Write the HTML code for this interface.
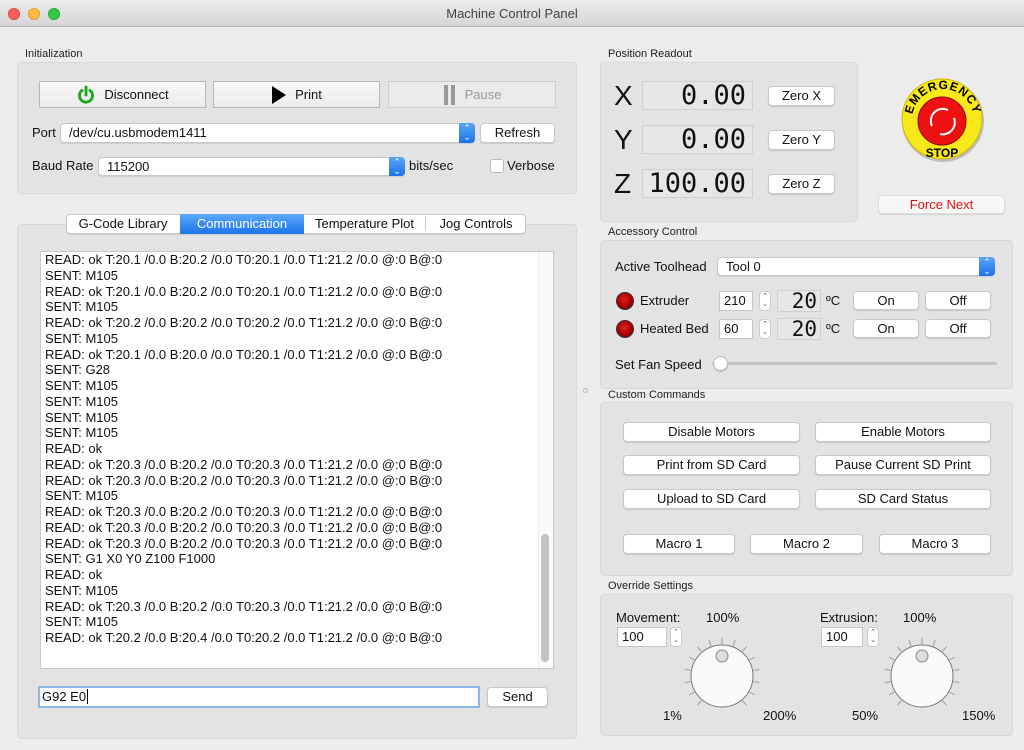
<!DOCTYPE html>
<html><head><meta charset="utf-8"><style>
*{box-sizing:border-box;margin:0;padding:0}
body{width:1024px;height:750px;background:#ececec;font-family:"Liberation Sans",sans-serif;font-size:13px;color:#111;position:relative;overflow:hidden}
.a{position:absolute}
.lbl{position:absolute;font-size:11px;color:#222}
.grp{position:absolute;background:#e3e3e3;border:1px solid #d8d8d8;border-radius:4px}
.btn{position:absolute;background:#fff;border:1px solid #c8c8c8;border-radius:4px;box-shadow:0 1px 1px rgba(0,0,0,.12);text-align:center;font-size:13px;line-height:18px}
.bigbtn{position:absolute;background:linear-gradient(#f8f8f8,#ebebeb);border:1px solid #b8b8b8;font-size:13px;display:flex;align-items:center;justify-content:center;gap:8px}
.combo{position:absolute;background:#fff;border:1px solid #c8c8c8;border-radius:4px;box-shadow:0 1px 1px rgba(0,0,0,.1);padding-left:8px;line-height:18px}
.combo .arr{position:absolute;right:-1px;top:-1px;bottom:-1px;width:16px;background:linear-gradient(#5aa6f7,#1a72e8);border-radius:0 4px 4px 0;color:#fff;font-size:9px;text-align:center;line-height:9px;padding-top:1px}
.lcd{position:absolute;background:#e6e6e6;border:1px solid #cfcfcf;font-family:"DejaVu Sans Mono","Liberation Mono",monospace;text-align:right;color:#111}
.inp{position:absolute;background:#fff;border:1px solid #c6c6c6;padding-left:4px;line-height:18px}
.step{position:absolute;width:12px;height:20px;background:#fff;border:1px solid #ccc;border-radius:4px;font-size:7px;line-height:8px;text-align:center;color:#555;padding-top:1px}
.led{position:absolute;width:18px;height:18px;border-radius:50%;background:radial-gradient(circle at 45% 40%,#d22 0,#a00 55%,#500 100%);border:1px solid #333}
</style></head><body>
<div class="a" style="left:0;top:0;width:1024px;height:27px;background:linear-gradient(#ebebeb,#d6d6d6);border-bottom:1px solid #b4b4b4"></div>
<div class="a" style="left:8px;top:8px;width:12px;height:12px;border-radius:50%;background:#fc605c;border:1px solid #df4744"></div>
<div class="a" style="left:28px;top:8px;width:12px;height:12px;border-radius:50%;background:#fdbc40;border:1px solid #de9f34"></div>
<div class="a" style="left:48px;top:8px;width:12px;height:12px;border-radius:50%;background:#34c84a;border:1px solid #27aa35"></div>
<div class="a" style="left:0;top:6px;width:1024px;text-align:center;font-size:13px;color:#444">Machine Control Panel</div>

<div class="lbl" style="left:25px;top:48px">Initialization</div>
<div class="grp" style="left:17px;top:62px;width:560px;height:132px"></div>
<div class="bigbtn" style="left:39px;top:81px;width:167px;height:27px"><svg width="20" height="20" viewBox="0 0 20 20"><path d="M6 5.5A6.5 6.5 0 1 0 14 5.5" fill="none" stroke="#1fa824" stroke-width="3" stroke-linecap="round"/><line x1="10" y1="2" x2="10" y2="10" stroke="#1fa824" stroke-width="3" stroke-linecap="round"/></svg>Disconnect</div>
<div class="bigbtn" style="left:213px;top:81px;width:167px;height:27px"><svg width="16" height="20"><path d="M1 1L15 10L1 19Z" fill="#000"/></svg>Print</div>
<div class="bigbtn" style="left:388px;top:81px;width:168px;height:27px;color:#999;border-color:#ccc;background:#eaeaea"><svg width="14" height="22"><rect x="1" y="1" width="4" height="20" fill="#999"/><rect x="8" y="1" width="4" height="20" fill="#999"/></svg>Pause</div>
<div class="a" style="left:32px;top:125px">Port</div>
<div class="combo" style="left:60px;top:123px;width:415px;height:20px">/dev/cu.usbmodem1411<div class="arr">⌃<br>⌄</div></div>
<div class="btn" style="left:480px;top:123px;width:75px;height:20px">Refresh</div>
<div class="a" style="left:32px;top:158px">Baud Rate</div>
<div class="combo" style="left:98px;top:157px;width:307px;height:19px">115200<div class="arr">⌃<br>⌄</div></div>
<div class="a" style="left:409px;top:158px">bits/sec</div>
<div class="a" style="left:490px;top:159px;width:14px;height:14px;background:#fff;border:1px solid #bbb;border-radius:3px"></div>
<div class="a" style="left:507px;top:158px">Verbose</div>

<div class="grp" style="left:17px;top:224px;width:560px;height:515px"></div>
<div class="a" style="left:66px;top:214px;width:460px;height:20px;background:#fff;border:1px solid #c8c8c8;border-radius:4px;box-shadow:0 1px 1px rgba(0,0,0,.1)"></div>
<div class="a" style="left:66px;top:216px;width:114px;text-align:center">G-Code Library</div>
<div class="a" style="left:180px;top:214px;width:124px;height:20px;background:linear-gradient(#5ba8f8,#1b74ea);color:#fff;text-align:center;line-height:20px">Communication</div>
<div class="a" style="left:304px;top:216px;width:122px;text-align:center;border-right:1px solid #ccc">Temperature Plot</div>
<div class="a" style="left:426px;top:216px;width:100px;text-align:center">Jog Controls</div>

<div class="a" style="left:40px;top:251px;width:514px;height:418px;background:#fff;border:1px solid #c8c8c8"></div>
<div class="a" style="left:538px;top:252px;width:15px;height:416px;background:#fafafa;border-left:1px solid #eee"></div>
<div class="a" style="left:541px;top:534px;width:8px;height:128px;background:#c2c2c2;border-radius:4px"></div>
<div class="a" style="left:45px;top:252px;line-height:15.75px;white-space:pre;font-size:13px">READ: ok T:20.1 /0.0 B:20.2 /0.0 T0:20.1 /0.0 T1:21.2 /0.0 @:0 B@:0
SENT: M105
READ: ok T:20.1 /0.0 B:20.2 /0.0 T0:20.1 /0.0 T1:21.2 /0.0 @:0 B@:0
SENT: M105
READ: ok T:20.2 /0.0 B:20.2 /0.0 T0:20.2 /0.0 T1:21.2 /0.0 @:0 B@:0
SENT: M105
READ: ok T:20.1 /0.0 B:20.0 /0.0 T0:20.1 /0.0 T1:21.2 /0.0 @:0 B@:0
SENT: G28
SENT: M105
SENT: M105
SENT: M105
SENT: M105
READ: ok
READ: ok T:20.3 /0.0 B:20.2 /0.0 T0:20.3 /0.0 T1:21.2 /0.0 @:0 B@:0
READ: ok T:20.3 /0.0 B:20.2 /0.0 T0:20.3 /0.0 T1:21.2 /0.0 @:0 B@:0
SENT: M105
READ: ok T:20.3 /0.0 B:20.2 /0.0 T0:20.3 /0.0 T1:21.2 /0.0 @:0 B@:0
READ: ok T:20.3 /0.0 B:20.2 /0.0 T0:20.3 /0.0 T1:21.2 /0.0 @:0 B@:0
READ: ok T:20.3 /0.0 B:20.2 /0.0 T0:20.3 /0.0 T1:21.2 /0.0 @:0 B@:0
SENT: G1 X0 Y0 Z100 F1000
READ: ok
SENT: M105
READ: ok T:20.3 /0.0 B:20.2 /0.0 T0:20.3 /0.0 T1:21.2 /0.0 @:0 B@:0
SENT: M105
READ: ok T:20.2 /0.0 B:20.4 /0.0 T0:20.2 /0.0 T1:21.2 /0.0 @:0 B@:0</div>
<div class="a" style="left:38px;top:686px;width:442px;height:22px;background:#fff;border:2px solid #8fb8ea;padding-left:2px;line-height:18px">G92 E0<span style="border-left:1px solid #000;margin-left:1px"></span></div>
<div class="btn" style="left:487px;top:687px;width:61px;height:20px">Send</div>

<div class="lbl" style="left:608px;top:48px">Position Readout</div>
<div class="grp" style="left:600px;top:62px;width:258px;height:160px"></div>
<div class="a" style="left:614px;top:80px;font-size:28px">X</div>
<div class="a" style="left:614px;top:124px;font-size:28px">Y</div>
<div class="a" style="left:614px;top:168px;font-size:28px">Z</div>
<div class="lcd" style="left:642px;top:81px;width:111px;height:29px;font-size:27px;line-height:27px;padding-right:6px">0.00</div>
<div class="lcd" style="left:642px;top:125px;width:111px;height:29px;font-size:27px;line-height:27px;padding-right:6px">0.00</div>
<div class="lcd" style="left:642px;top:169px;width:111px;height:29px;font-size:27px;line-height:27px;padding-right:6px">100.00</div>
<div class="btn" style="left:768px;top:86px;width:67px;height:20px">Zero X</div>
<div class="btn" style="left:768px;top:130px;width:67px;height:20px">Zero Y</div>
<div class="btn" style="left:768px;top:174px;width:67px;height:20px">Zero Z</div>
<svg class="a" style="left:898px;top:74px" width="90" height="92" viewBox="0 0 90 92">
<defs><path id="tp" d="M14 46A31 31 0 0 1 76 46"/><path id="bp" d="M20 56A27 27 0 0 0 70 56"/></defs>
<circle cx="45" cy="47" r="41" fill="#333" opacity=".25"/>
<circle cx="44" cy="45" r="40" fill="#f6e81a" stroke="#c8b800"/>
<circle cx="44" cy="47" r="24" fill="#e11" stroke="#900"/>
<path d="M34 52A12 12 0 0 1 50 36" fill="none" stroke="#fff" stroke-width="2"/>
<path d="M56 44A12 12 0 0 1 42 60" fill="none" stroke="#fff" stroke-width="2"/>
<text font-family="Liberation Sans" font-weight="bold" font-size="12" fill="#000"><textPath href="#tp" startOffset="50%" text-anchor="middle" letter-spacing="1">EMERGENCY</textPath></text>
<text font-family="Liberation Sans" font-weight="bold" font-size="12" fill="#000" x="44" y="83" text-anchor="middle">STOP</text>
</svg>
<div class="btn" style="left:878px;top:195px;width:127px;height:19px;color:#e01010;border-color:#ddd;background:#f7f7f7">Force Next</div>

<div class="lbl" style="left:608px;top:226px">Accessory Control</div>
<div class="grp" style="left:600px;top:240px;width:413px;height:149px"></div>
<div class="a" style="left:615px;top:259px">Active Toolhead</div>
<div class="combo" style="left:717px;top:257px;width:278px;height:19px">Tool 0<div class="arr">⌃<br>⌄</div></div>
<div class="led" style="left:616px;top:292px"></div>
<div class="a" style="left:640px;top:293px">Extruder</div>
<div class="led" style="left:616px;top:320px"></div>
<div class="a" style="left:640px;top:321px">Heated Bed</div>
<div class="inp" style="left:719px;top:291px;width:34px;height:20px">210</div>
<div class="inp" style="left:719px;top:319px;width:34px;height:20px">60</div>
<div class="step" style="left:759px;top:291px">⌃<br>⌄</div>
<div class="step" style="left:759px;top:319px">⌃<br>⌄</div>
<div class="lcd" style="left:777px;top:290px;width:44px;height:22px;font-size:21px;line-height:20px;padding-right:3px">20</div>
<div class="lcd" style="left:777px;top:318px;width:44px;height:22px;font-size:21px;line-height:20px;padding-right:3px">20</div>
<div class="a" style="left:826px;top:293px">ºC</div>
<div class="a" style="left:826px;top:321px">ºC</div>
<div class="btn" style="left:853px;top:291px;width:66px;height:19px">On</div>
<div class="btn" style="left:925px;top:291px;width:66px;height:19px">Off</div>
<div class="btn" style="left:853px;top:319px;width:66px;height:19px">On</div>
<div class="btn" style="left:925px;top:319px;width:66px;height:19px">Off</div>
<div class="a" style="left:615px;top:357px">Set Fan Speed</div>
<div class="a" style="left:712px;top:362px;width:285px;height:3px;background:#c4c4c4;border-radius:2px"></div>
<div class="a" style="left:713px;top:356px;width:15px;height:15px;border-radius:50%;background:#fff;border:1px solid #bbb;box-shadow:0 1px 1px rgba(0,0,0,.2)"></div>
<div class="a" style="left:583px;top:388px;width:5px;height:5px;border-radius:50%;border:1px solid #bbb"></div>

<div class="lbl" style="left:608px;top:389px">Custom Commands</div>
<div class="grp" style="left:600px;top:402px;width:413px;height:174px"></div>
<div class="btn" style="left:623px;top:422px;width:177px;height:20px">Disable Motors</div>
<div class="btn" style="left:815px;top:422px;width:176px;height:20px">Enable Motors</div>
<div class="btn" style="left:623px;top:455px;width:177px;height:20px">Print from SD Card</div>
<div class="btn" style="left:815px;top:455px;width:176px;height:20px">Pause Current SD Print</div>
<div class="btn" style="left:623px;top:489px;width:177px;height:20px">Upload to SD Card</div>
<div class="btn" style="left:815px;top:489px;width:176px;height:20px">SD Card Status</div>
<div class="btn" style="left:623px;top:534px;width:112px;height:20px">Macro 1</div>
<div class="btn" style="left:750px;top:534px;width:113px;height:20px">Macro 2</div>
<div class="btn" style="left:879px;top:534px;width:112px;height:20px">Macro 3</div>

<div class="lbl" style="left:608px;top:580px">Override Settings</div>
<div class="grp" style="left:600px;top:594px;width:413px;height:142px"></div>
<div class="a" style="left:616px;top:610px">Movement:</div>
<div class="a" style="left:706px;top:610px">100%</div>
<div class="inp" style="left:617px;top:627px;width:50px;height:20px">100</div>
<div class="step" style="left:670px;top:627px">⌃<br>⌄</div>
<div class="a" style="left:663px;top:708px">1%</div>
<div class="a" style="left:763px;top:708px">200%</div>
<div class="a" style="left:820px;top:610px">Extrusion:</div>
<div class="a" style="left:903px;top:610px">100%</div>
<div class="inp" style="left:821px;top:627px;width:42px;height:20px">100</div>
<div class="step" style="left:867px;top:627px">⌃<br>⌄</div>
<div class="a" style="left:852px;top:708px">50%</div>
<div class="a" style="left:962px;top:708px">150%</div>
<svg class="a" style="left:680px;top:634px" width="84" height="84" viewBox="-42 -42 84 84">
<g stroke="#999" stroke-width="1">
<line x1="0" y1="-38" x2="0" y2="-32" transform="rotate(-140)"/><line x1="0" y1="-38" x2="0" y2="-32" transform="rotate(-120)"/><line x1="0" y1="-38" x2="0" y2="-32" transform="rotate(-100)"/><line x1="0" y1="-38" x2="0" y2="-32" transform="rotate(-80)"/><line x1="0" y1="-38" x2="0" y2="-32" transform="rotate(-60)"/><line x1="0" y1="-38" x2="0" y2="-32" transform="rotate(-40)"/><line x1="0" y1="-38" x2="0" y2="-32" transform="rotate(-20)"/><line x1="0" y1="-38" x2="0" y2="-32"/><line x1="0" y1="-38" x2="0" y2="-32" transform="rotate(20)"/><line x1="0" y1="-38" x2="0" y2="-32" transform="rotate(40)"/><line x1="0" y1="-38" x2="0" y2="-32" transform="rotate(60)"/><line x1="0" y1="-38" x2="0" y2="-32" transform="rotate(80)"/><line x1="0" y1="-38" x2="0" y2="-32" transform="rotate(100)"/><line x1="0" y1="-38" x2="0" y2="-32" transform="rotate(120)"/><line x1="0" y1="-38" x2="0" y2="-32" transform="rotate(140)"/>
</g>
<circle r="31" fill="#fafafa" stroke="#777"/><circle cx="0" cy="-20" r="6" fill="#ddd" stroke="#888"/>
</svg>
<svg class="a" style="left:880px;top:634px" width="84" height="84" viewBox="-42 -42 84 84">
<g stroke="#999" stroke-width="1">
<line x1="0" y1="-38" x2="0" y2="-32" transform="rotate(-140)"/><line x1="0" y1="-38" x2="0" y2="-32" transform="rotate(-120)"/><line x1="0" y1="-38" x2="0" y2="-32" transform="rotate(-100)"/><line x1="0" y1="-38" x2="0" y2="-32" transform="rotate(-80)"/><line x1="0" y1="-38" x2="0" y2="-32" transform="rotate(-60)"/><line x1="0" y1="-38" x2="0" y2="-32" transform="rotate(-40)"/><line x1="0" y1="-38" x2="0" y2="-32" transform="rotate(-20)"/><line x1="0" y1="-38" x2="0" y2="-32"/><line x1="0" y1="-38" x2="0" y2="-32" transform="rotate(20)"/><line x1="0" y1="-38" x2="0" y2="-32" transform="rotate(40)"/><line x1="0" y1="-38" x2="0" y2="-32" transform="rotate(60)"/><line x1="0" y1="-38" x2="0" y2="-32" transform="rotate(80)"/><line x1="0" y1="-38" x2="0" y2="-32" transform="rotate(100)"/><line x1="0" y1="-38" x2="0" y2="-32" transform="rotate(120)"/><line x1="0" y1="-38" x2="0" y2="-32" transform="rotate(140)"/>
</g>
<circle r="31" fill="#fafafa" stroke="#777"/><circle cx="0" cy="-20" r="6" fill="#ddd" stroke="#888"/>
</svg>
</body></html>
